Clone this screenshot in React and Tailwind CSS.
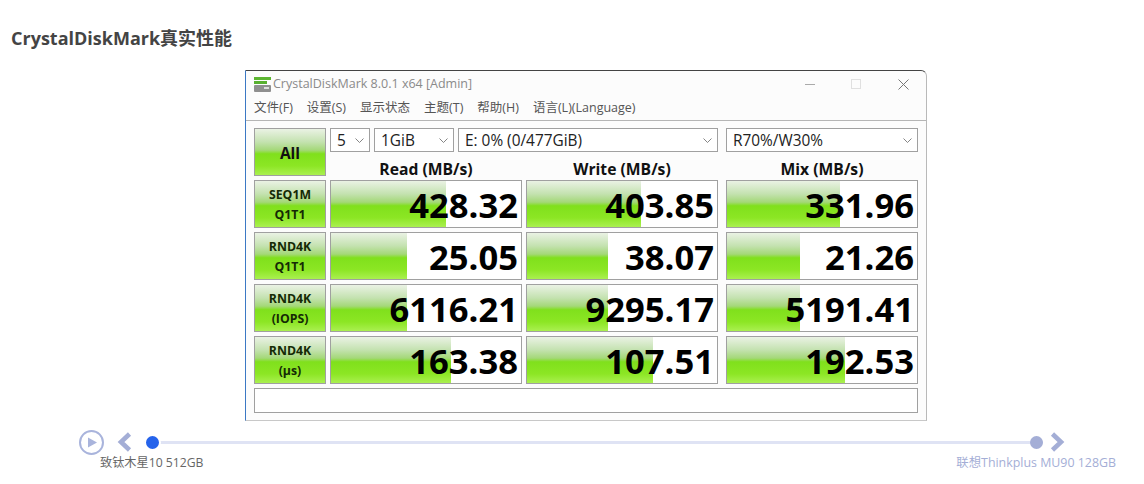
const FONT = '"Open Sans","Noto Sans","Noto Sans CJK SC",sans-serif';
const rows = [
  { a: 'SEQ1M', b: 'Q1T1', v: [['428.32', 115], ['403.85', 114], ['331.96', 113]] },
  { a: 'RND4K', b: 'Q1T1', v: [['25.05', 76], ['38.07', 81], ['21.26', 73]] },
  { a: 'RND4K', b: '(IOPS)', v: [['6116.21', 76], ['9295.17', 81], ['5191.41', 73]] },
  { a: 'RND4K', b: '(μs)', v: [['163.38', 120], ['107.51', 126], ['192.53', 118]] },
];
const grad = 'bg-[linear-gradient(180deg,#eaf2e4_0%,#c4e2b0_28%,#a4d878_46%,#80e01c_54%,#8ce624_80%,#aaf050_100%)]';

function Chevron() {
  return (
    <svg width="9" height="5" viewBox="0 0 9 5" className="absolute right-[5px] top-[9px]" fill="none" stroke="#777" strokeWidth="0.9">
      <path d="M0.5 0.5 L4.5 4.5 L8.5 0.5" />
    </svg>
  );
}
function Select({ w, children }) {
  return (
    <div className={`relative h-[24px] ${w} border border-[#a0a0a0] bg-white pl-[6px] text-[15.4px] leading-[23px] text-[#222]`}>
      {children}
      <Chevron />
    </div>
  );
}
function Cell({ value, bar }) {
  return (
    <div className="relative h-[48px] w-[192px] border border-[#a0a0a0] bg-white">
      <div className={`absolute left-0 top-0 h-full ${grad}`} style={{ width: bar }} />
      <div className="relative pr-[3px] text-right text-[34.6px] font-bold leading-[48px] text-black">{value}</div>
    </div>
  );
}
function Label({ a, b }) {
  return (
    <div className={`flex h-[48px] w-[72px] shrink-0 flex-col items-center border border-[#a0a0a0] pt-[4px] ${grad} text-[12.3px] font-bold leading-[20px] text-[#152a05]`}>
      <span>{a}</span><span>{b}</span>
    </div>
  );
}

export default function App() {
  return (
    <div className="h-[484px] w-[1144px] overflow-hidden bg-white" style={{ fontFamily: FONT }}>
      <div className="pl-[11px] pt-[26px] text-[18px] font-bold leading-[24px] text-[#444]">CrystalDiskMark真实性能</div>
      <div className="ml-[245px] mt-[20px] h-[351px] w-[682px] rounded-tr-[6px] border border-[#b9b9b9] border-t-[#444] border-l-[#3b78c4] border-b-[#c8c8c8] bg-[#fcfcfc]">
        <div className="flex h-[26px] items-center pl-[8px]">
          <svg width="17" height="17" viewBox="0 0 17 17">
            <rect x="0" y="1" width="17" height="3" fill="#5cb531" />
            <rect x="0" y="5" width="13" height="3" fill="#58b030" />
            <rect x="0" y="9" width="17" height="7" rx="1" fill="#8f8f8f" />
            <rect x="10" y="11" width="5" height="2" fill="#ddd" />
          </svg>
          <span className="ml-[2px] text-[12.5px] text-[#8a8a8a]">CrystalDiskMark 8.0.1 x64 [Admin]</span>
          <div className="ml-auto flex items-center pr-[17px]">
            <div className="h-px w-[10px] bg-[#aaa]" />
            <div className="ml-[36px] h-[10px] w-[10px] border border-[#e0e0e0]" />
            <svg className="ml-[37px]" width="11" height="11" viewBox="0 0 11 11" stroke="#777" strokeWidth="1"><path d="M0.5 0.5 L10.5 10.5 M10.5 0.5 L0.5 10.5" /></svg>
          </div>
        </div>
        <div className="flex h-[24px] items-center border-b border-[#b5b5b5] pl-[8px] text-[12.5px] text-[#555]">
          <span>文件(F)</span><span className="ml-[14px]">设置(S)</span><span className="ml-[14px]">显示状态</span><span className="ml-[14px]">主题(T)</span><span className="ml-[14px]">帮助(H)</span><span className="ml-[14px]">语言(L)(Language)</span>
        </div>
        <div className="px-[8px] pt-[7px]">
          <div className="flex gap-[4px]">
            <div className={`flex h-[48px] w-[72px] shrink-0 items-center justify-center border border-[#a0a0a0] pt-[3px] ${grad} text-[15.5px] font-bold text-[#111]`}>All</div>
            <div className="flex flex-col">
              <div className="flex">
                <Select w="w-[40px]">5</Select>
                <div className="ml-[4px]"><Select w="w-[80px]">1GiB</Select></div>
                <div className="ml-[4px]"><Select w="w-[260px]">E: 0% (0/477GiB)</Select></div>
                <div className="ml-[8px]"><Select w="w-[192px]">R70%/W30%</Select></div>
              </div>
              <div className="flex h-[24px] pt-[10px] text-center text-[15.7px] font-bold leading-[15px] text-[#111]">
                <span className="w-[192px]">Read (MB/s)</span>
                <span className="ml-[4px] w-[192px]">Write (MB/s)</span>
                <span className="ml-[8px] w-[192px]">Mix (MB/s)</span>
              </div>
            </div>
          </div>
          <div className="mt-[4px] flex flex-col gap-[4px]">
            {rows.map((r, i) => (
              <div key={i} className="flex">
                <Label a={r.a} b={r.b} />
                <div className="ml-[4px]"><Cell value={r.v[0][0]} bar={r.v[0][1]} /></div>
                <div className="ml-[4px]"><Cell value={r.v[1][0]} bar={r.v[1][1]} /></div>
                <div className="ml-[8px]"><Cell value={r.v[2][0]} bar={r.v[2][1]} /></div>
              </div>
            ))}
            <div className="h-[25px] w-[664px] border border-[#a0a0a0] bg-white" />
          </div>
        </div>
      </div>
      <div className="ml-[79px] mt-[8px] flex h-[26px] w-[990px] items-center">
        <svg width="25" height="25" viewBox="0 0 25 25">
          <circle cx="12.5" cy="12.5" r="11.5" fill="none" stroke="#a9b4dc" strokeWidth="2" />
          <path d="M9 7.5 L18 12.5 L9 17.5 Z" fill="#a9b4dc" />
        </svg>
        <svg className="ml-[13px]" width="15" height="20" viewBox="0 0 15 20" fill="none" stroke="#a4aed6" strokeWidth="4.6">
          <path d="M12.5 2 L4 10 L12.5 18" />
        </svg>
        <div className="relative ml-[12px] h-[3px] flex-1 bg-[#dfe3f4]">
          <div className="absolute left-0 top-[-7px] h-[17px] w-[17px] rounded-full border-2 border-white bg-[#2563eb]" />
          <div className="absolute right-[0px] top-[-5px] h-[13px] w-[13px] rounded-full bg-[#a4aed6]" />
        </div>
        <svg className="ml-[7px]" width="15" height="20" viewBox="0 0 15 20" fill="none" stroke="#a4aed6" strokeWidth="4.6">
          <path d="M2.5 2 L11 10 L2.5 18" />
        </svg>
        <div className="w-[4px] shrink-0" />
      </div>
      <div className="flex justify-between pl-[100px] pr-[28px] leading-[16px]">
        <span className="text-[12.2px] text-[#666]">致钛木星10 512GB</span>
        <span className="text-[12.4px] text-[#a4aed6]">联想Thinkplus MU90 128GB</span>
      </div>
    </div>
  );
}
